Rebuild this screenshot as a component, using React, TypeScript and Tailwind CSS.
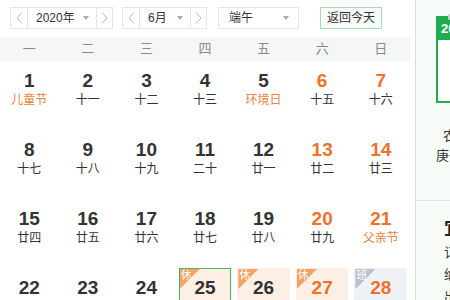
import React from 'react';

const CJK = '"Liberation Sans", "Noto Sans CJK SC", sans-serif';

type Day = {
  d: number;
  lunar: string;
  fest?: boolean;
  weekend?: boolean;
  mark?: '休' | '班';
  today?: boolean;
};

const DAYS: Day[] = [
  { d: 1, lunar: '儿童节', fest: true },
  { d: 2, lunar: '十一' },
  { d: 3, lunar: '十二' },
  { d: 4, lunar: '十三' },
  { d: 5, lunar: '环境日', fest: true },
  { d: 6, lunar: '十五', weekend: true },
  { d: 7, lunar: '十六', weekend: true },
  { d: 8, lunar: '十七' },
  { d: 9, lunar: '十八' },
  { d: 10, lunar: '十九' },
  { d: 11, lunar: '二十' },
  { d: 12, lunar: '廿一' },
  { d: 13, lunar: '廿二', weekend: true },
  { d: 14, lunar: '廿三', weekend: true },
  { d: 15, lunar: '廿四' },
  { d: 16, lunar: '廿五' },
  { d: 17, lunar: '廿六' },
  { d: 18, lunar: '廿七' },
  { d: 19, lunar: '廿八' },
  { d: 20, lunar: '廿九', weekend: true },
  { d: 21, lunar: '父亲节', fest: true, weekend: true },
  { d: 22, lunar: '三十' },
  { d: 23, lunar: '闰四' },
  { d: 24, lunar: '初三' },
  { d: 25, lunar: '端午节', mark: '休', today: true },
  { d: 26, lunar: '初五', mark: '休' },
  { d: 27, lunar: '初六', mark: '休', weekend: true },
  { d: 28, lunar: '初七', mark: '班', weekend: true },
];

const WEEK = ['一', '二', '三', '四', '五', '六', '日'];

function Chevron({ dir }: { dir: 'l' | 'r' }) {
  return (
    <svg width="7" height="12" viewBox="0 0 7 12" fill="none" stroke="#b5b5b5" strokeWidth="1">
      {dir === 'l' ? <polyline points="6,0.5 1,6 6,11.5" /> : <polyline points="1,0.5 6,6 1,11.5" />}
    </svg>
  );
}

function Caret() {
  return <span className="inline-block h-0 w-0 border-x-[3.5px] border-t-[4px] border-x-transparent border-t-[#aaa]" />;
}

function Stepper({ label, w }: { label: string; w: string }) {
  return (
    <div className={`flex h-[22px] border border-[#e4e4e4] bg-white ${w}`}>
      <div className="flex w-[17px] items-center justify-center border-r border-[#e4e4e4]">
        <Chevron dir="l" />
      </div>
      <div className="flex flex-1 items-center justify-between pl-[8px] pr-[7px] text-[12px] text-[#333]">
        <span>{label}</span>
        <Caret />
      </div>
      <div className="flex w-[16px] items-center justify-center border-l border-[#e4e4e4]">
        <Chevron dir="r" />
      </div>
    </div>
  );
}

function Cell({ day }: { day: Day }) {
  const bg = day.mark === '班' ? 'bg-[#eef2f6]' : day.mark ? 'bg-[#fdefe3]' : '';
  const border = day.today ? 'border border-[#49b563]' : 'border border-transparent';
  const numColor = day.weekend ? 'text-[#f0712b]' : 'text-[#333]';
  return (
    <div className="h-[69px] px-[3px]">
      <div className={`relative h-[64px] ${bg} ${border}`}>
        {day.mark && (
          <>
            <div
              className={`absolute left-0 top-0 h-[20px] w-[20px] ${
                day.mark === '班' ? 'bg-[#b7c1cc]' : 'bg-[#f5a263]'
              } [clip-path:polygon(0_0,100%_0,0_100%)]`}
            />
            <span className="absolute left-[1px] top-[-1px] text-[11px] leading-[14px] text-white">{day.mark}</span>
          </>
        )}
        <div
          className={`pt-[9px] text-center text-[19px] font-bold leading-[20px] ${numColor}`}
          style={{ fontFamily: '"Liberation Sans", Arial, sans-serif' }}
        >
          {day.d}
        </div>
        <div
          className={`mt-[1px] text-center text-[12px] leading-[16px] ${day.fest ? 'text-[#e9833d]' : 'text-[#333]'}`}
        >
          {day.lunar}
        </div>
      </div>
    </div>
  );
}

export default function App() {
  return (
    <div className="flex h-[300px] w-[450px] overflow-hidden bg-white" style={{ fontFamily: CJK }}>
      <div className="w-[415px] shrink-0">
        <div className="flex h-[37px] items-start pl-[10px] pt-[7px]">
          <Stepper label="2020年" w="w-[103px]" />
          <div className="ml-[9px]">
            <Stepper label="6月" w="w-[85px]" />
          </div>
          <div className="ml-[11px] flex h-[22px] w-[81px] items-center justify-between border border-[#e4e4e4] bg-white pl-[10px] pr-[9px] text-[12px] text-[#333]">
            <span>端午</span>
            <Caret />
          </div>
          <div className="ml-[21px] flex h-[22px] w-[62px] items-center justify-center border border-[#a9d8b4] bg-[#f6fbf7] text-[12px] text-[#333]">
            返回今天
          </div>
        </div>
        <div className="grid h-[24px] w-[410px] grid-cols-7 bg-[#f4f6f8]">
          {WEEK.map((w) => (
            <div key={w} className="flex items-center justify-center text-[13px] text-[#8a8a8a]">
              {w}
            </div>
          ))}
        </div>
        <div className="grid w-[410px] grid-cols-7">
          {DAYS.map((d) => (
            <Cell key={d.d} day={d} />
          ))}
        </div>
      </div>
      <div className="w-[170px] shrink-0 border-l border-[#cfe4d5] bg-[#f8fcf9]">
        <div className="relative ml-[20px] mt-[16px] h-[87px] w-[110px] border-2 border-[#1fae4e] bg-white">
          <div className="absolute left-[10px] top-[-4px] h-[6px] w-[3px] rounded-sm bg-[#ccc]" />
          <div className="flex h-[22px] items-center bg-[#1fae4e] pl-[3px] text-[13px] font-bold text-white">
            2020年6月25日
          </div>
        </div>
        <div className="mt-[23px] pl-[27px] text-[13px] leading-[20px] text-[#333]">农历五月初五</div>
        <div className="pl-[20px] text-[13px] leading-[20px] text-[#333]">庚子年 壬午月 庚寅日</div>
        <div className="mt-[34px] border-t border-[#dde9e0] pl-[28px] pt-[15px]">
          <div className="text-[18px] font-bold leading-[22px] text-[#222]" style={{ fontFamily: '"Noto Sans CJK SC", serif' }}>
            宜
          </div>
          <div className="mt-[4px] text-[13px] leading-[22px] text-[#333]">
            <div>订盟</div>
            <div>纳采</div>
            <div>出行</div>
          </div>
        </div>
      </div>
    </div>
  );
}
